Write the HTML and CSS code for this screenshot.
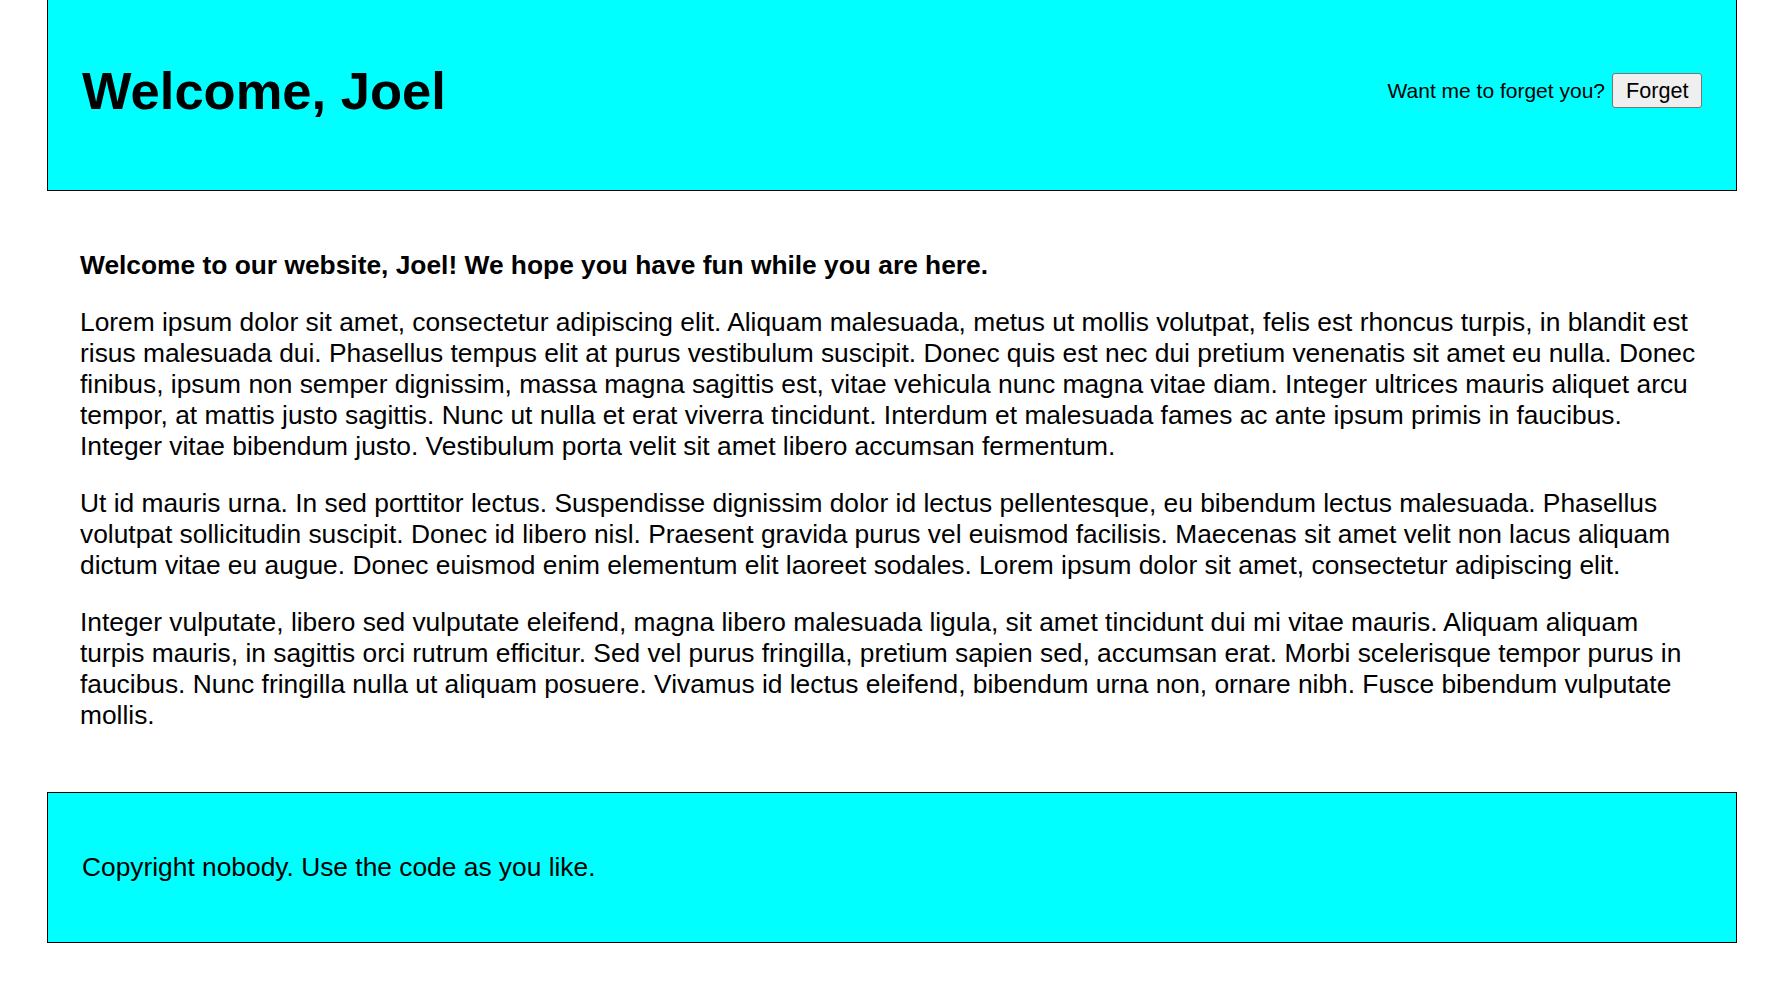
FILE: index.html
```html
<!DOCTYPE html>
<html lang="en">
<head>
<meta charset="utf-8">
<title>Welcome, Joel</title>
<link rel="stylesheet" href="styles.css">
</head>
<body>
<div class="page">
  <header class="site-header">
    <h1 class="title">Welcome, Joel</h1>
    <div class="forget">
      <span class="forget-label">Want me to forget you?</span>
      <button class="forget-btn" type="button">Forget</button>
    </div>
  </header>
  <main class="content">
    <p class="intro">Welcome to our website, Joel! We hope you have fun while you are here.</p>
    <p>Lorem ipsum dolor sit amet, consectetur adipiscing elit. Aliquam malesuada, metus ut mollis volutpat, felis est rhoncus turpis, in blandit est risus malesuada dui. Phasellus tempus elit at purus vestibulum suscipit. Donec quis est nec dui pretium venenatis sit amet eu nulla. Donec finibus, ipsum non semper dignissim, massa magna sagittis est, vitae vehicula nunc magna vitae diam. Integer ultrices mauris aliquet arcu tempor, at mattis justo sagittis. Nunc ut nulla et erat viverra tincidunt. Interdum et malesuada fames ac ante ipsum primis in faucibus. Integer vitae bibendum justo. Vestibulum porta velit sit amet libero accumsan fermentum.</p>
    <p>Ut id mauris urna. In sed porttitor lectus. Suspendisse dignissim dolor id lectus pellentesque, eu bibendum lectus malesuada. Phasellus volutpat sollicitudin suscipit. Donec id libero nisl. Praesent gravida purus vel euismod facilisis. Maecenas sit amet velit non lacus aliquam dictum vitae eu augue. Donec euismod enim elementum elit laoreet sodales. Lorem ipsum dolor sit amet, consectetur adipiscing elit.</p>
    <p>Integer vulputate, libero sed vulputate eleifend, magna libero malesuada ligula, sit amet tincidunt dui mi vitae mauris. Aliquam aliquam turpis mauris, in sagittis orci rutrum efficitur. Sed vel purus fringilla, pretium sapien sed, accumsan erat. Morbi scelerisque tempor purus in faucibus. Nunc fringilla nulla ut aliquam posuere. Vivamus id lectus eleifend, bibendum urna non, ornare nibh. Fusce bibendum vulputate mollis.</p>
  </main>
  <footer class="site-footer">
    <p class="copyright">Copyright nobody. Use the code as you like.</p>
  </footer>
</div>
</body>
</html>
```
FILE: styles.css
```css
html, body {
  margin: 0;
  padding: 0;
  background: #ffffff;
}

body {
  font-family: "Liberation Sans", Arial, sans-serif;
  color: #000000;
  font-size: 26.35px;
  line-height: 31px;
}

.page {
  margin-left: 47px;
  width: 1690px;
}

.site-header {
  box-sizing: border-box;
  height: 191px;
  display: flex;
  align-items: center;
  justify-content: space-between;
  padding: 0 34px 9px;
  background: #00ffff;
  border: 1px solid #000000;
  border-top: none;
}

.title {
  margin: 0;
  font-size: 52.5px;
  font-weight: bold;
  line-height: 60px;
}

.forget {
  display: flex;
  align-items: center;
  gap: 7px;
}

.forget-label {
  font-size: 21px;
  line-height: 24px;
}

.forget-btn {
  font-family: "Liberation Sans", Arial, sans-serif;
  font-size: 21.6px;
  line-height: 25px;
  color: #000000;
  background: #efefef;
  border: 1px solid #767676;
  border-radius: 3px;
  padding: 4px 13px;
  height: 35px;
  width: 90px;
}

.content {
  padding: 34px 33px 35px;
}

.content p {
  margin: 26px 0;
}

.content .intro {
  margin-top: 25px;
  margin-bottom: 26px;
  font-weight: bold;
}

.site-footer {
  box-sizing: border-box;
  height: 151px;
  display: flex;
  align-items: center;
  padding: 0 34px;
  background: #00ffff;
  border: 1px solid #000000;
}

.copyright {
  margin: 0;
}
```
